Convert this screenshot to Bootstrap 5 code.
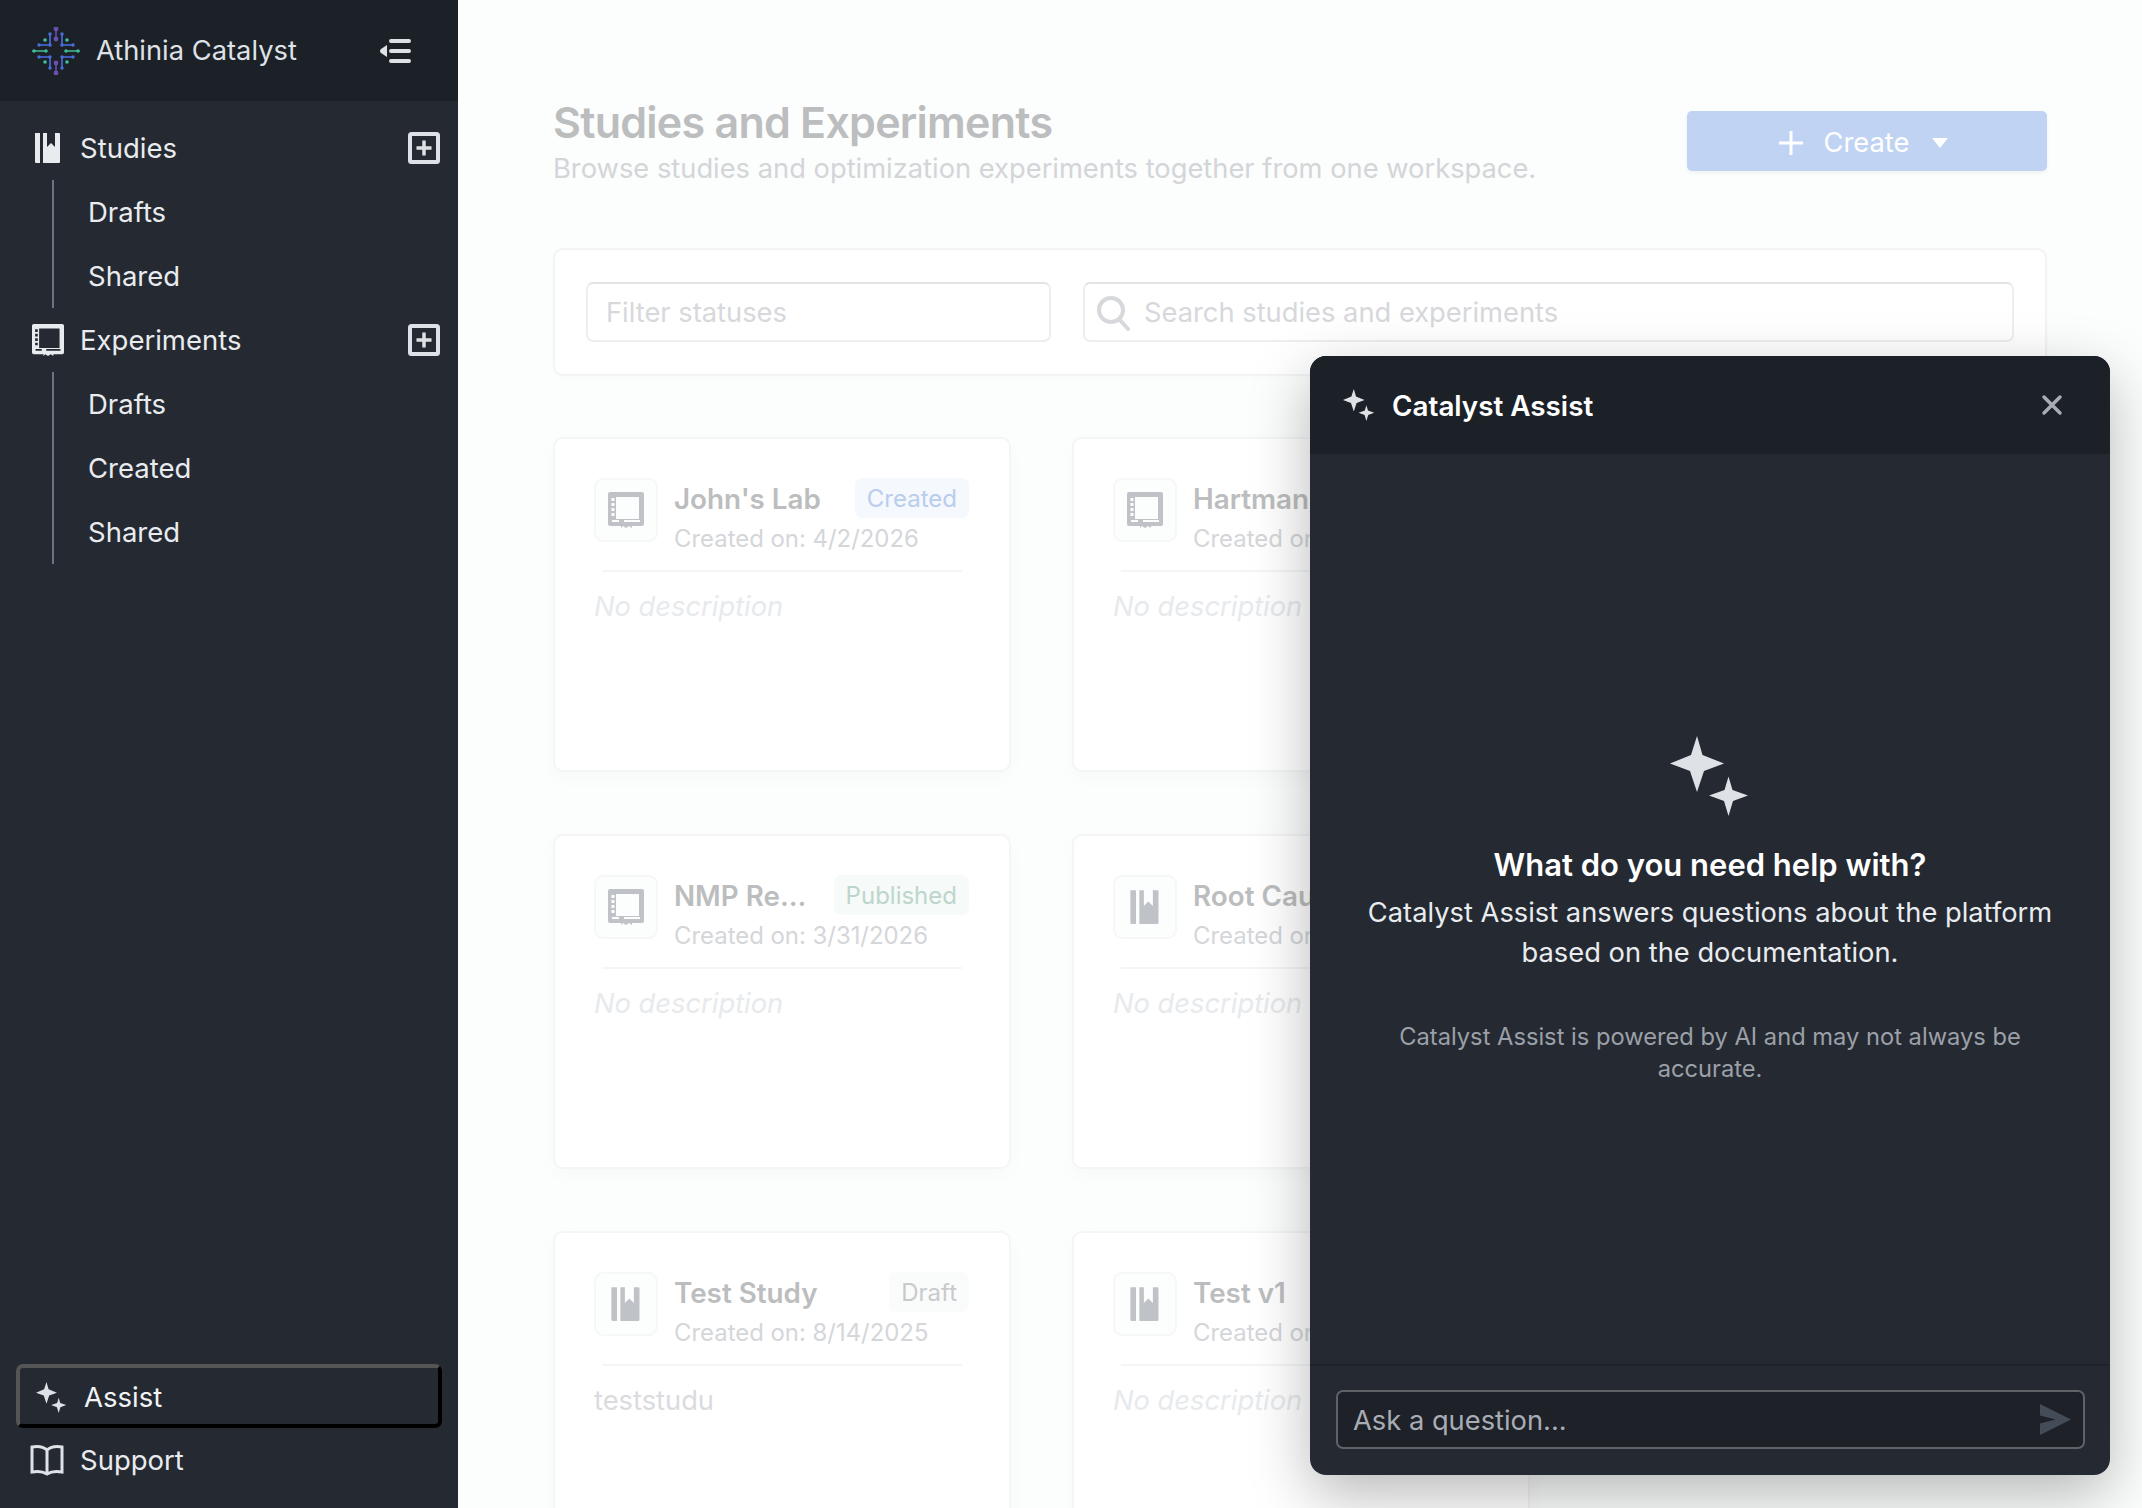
<!DOCTYPE html>
<html lang="en">
<head>
    <meta charset="UTF-8">
    <meta name="viewport" content="width=device-width, initial-scale=1.0">
    <title>Athinia Catalyst</title>
    <link href="https://cdn.jsdelivr.net/npm/bootstrap@5.3.0/dist/css/bootstrap.min.css" rel="stylesheet">
    <style>
        html, body { height: 100%; }
        body { font-family: Inter, "Liberation Sans", sans-serif; background: #fcfdfd; overflow: hidden; }
        /* sidebar */
        .side { width: 458px; height: 100vh; background: #252932; color: #e9ecef; font-size: 27.5px; flex: none; }
        .side-head { height: 101px; background: #1c2027; padding: 0 46px 0 32px; color: #dee2e6; }
        .side-head svg.logo { width: 48px; height: 48px; margin-right: 16px; }
        .side-head span { padding-top: 2px; font-size: 27.3px; }
        .side-nav { padding-top: 15px; }
        .nav-row { height: 64px; padding: 0 18px 0 32px; color: #e9ecef; }
        .nav-row span { padding-top: 2px; }
        .nav-row .ico { width: 32px; height: 32px; margin-right: 16px; flex: none; }
        .sub-list { margin-left: 52px; border-left: 2px solid #6c757d; }
        .sub-row { height: 64px; padding: 2px 0 0 34px; color: #e9ecef; display: flex; align-items: center; }
        .assist-btn { margin: 0 16px; height: 64px; background: #252932; color: #f1f3f5; font-size: 27.5px; padding: 3px 0 0 16px; border-style: solid; border-width: 4px; border-color: #555 #000 #000 #555; border-radius: 7px; width: 426px; text-align: left; }
        .assist-btn svg { width: 31px; height: 31px; margin-right: 17px; color: #dee2e6; }
        .support-row { height: 64px; margin-bottom: 16px; padding-left: 30px; }
        .support-row svg { width: 34px; height: 32px; margin-right: 16px; }
        .support-row span { padding-top: 2px; }
        /* workspace, dimmed */
        .work { padding: 99px 95px 0 95px; flex: 1; min-width: 0; }
        .work-head { height: 149px; }
        .work-title { font-size: 43px; font-weight: 600; color: #bcbdbe; line-height: 46px; letter-spacing: -.75px; margin: 0; }
        .work-sub { font-size: 27.3px; color: #d3d5d8; line-height: 44px; margin-top: 2px; }
        .create-btn { width: 360px; height: 60px; margin-top: 12px; padding: 4px 8px 0 0; background: #c1d3f3; border: 0; border-radius: 5px; color: #fff; font-size: 27.3px; box-shadow: 0 2px 4px rgba(0,0,0,.05); }
        .create-btn svg.plus { margin-right: 20px; }
        .create-btn svg.caret { margin-left: 23px; }
        .filter-box { border: 2px solid #f3f4f5; border-radius: 10px; background: #fff; height: 128px; padding: 32px 31px; box-shadow: 0 1px 4px rgba(0,0,0,.02); gap: 32px; }
        .fake-input { height: 60px; border: 2px solid #eceef0; border-top-color: #e2e3e5; border-radius: 7px; background: #fff; font-size: 27.3px; color: #d6d8db; padding: 2px 18px 0; }
        .fake-input.with-ico { padding-left: 11px; }
        .fake-input.with-ico svg { margin-right: 14px; }
        .cards-grid { display: grid; grid-template-columns: 458px 458px; column-gap: 61px; row-gap: 62px; margin-top: 61px; }
        .study-card { height: 335px; border: 2px solid #f4f5f6; border-radius: 10px; background: #fff; padding: 39px 40px 0 39px; box-shadow: 0 6px 20px rgba(0,0,0,.025); }
        .ico-box { width: 64px; height: 64px; border: 2px solid #f6f7f8; border-radius: 9px; background: #fcfdfd; flex: none; margin-right: 16px; color: #bfc3c7; }
        .ico-box svg { width: 36px; height: 36px; }
        .card-name { font-size: 27.8px; font-weight: 600; color: #bcbdbe; line-height: 43px; white-space: nowrap; }
        .card-date { font-size: 23.9px; color: #d4d6d9; line-height: 36.500px; white-space: nowrap; }
        .chip { height: 40px; padding: 0 12px; border-radius: 7px; font-size: 24px; line-height: 42px; margin-left: auto; white-space: nowrap; }
        .chip-blue { background: #f5f8fd; color: #b9cdec; }
        .chip-green { background: #f6faf8; color: #bdd6cb; }
        .chip-gray { background: #fafbfb; color: #c8cacc; }
        .card-rule { height: 2px; background: #f4f5f6; margin: 12.500px 7px 14.500px 8px; }
        .card-desc { font-size: 27.3px; color: #e7eaed; font-style: italic; line-height: 40px; white-space: nowrap; }
        .card-desc.has-text { font-style: normal; color: #d9dbde; }
        /* assist panel over the page */
        .assist-panel { position: absolute; left: 1310px; top: 356px; width: 800px; height: 1119px; background: #252932; border-radius: 16px; overflow: hidden; color: #fff; }
        .panel-shadow { position: absolute; left: 1310px; top: 356px; width: 800px; height: 1119px; border-radius: 16px; box-shadow: 0 20px 60px rgba(0,0,0,.28); }
        .assist-head { height: 98px; background: #1c2027; padding: 0 47px 0 33px; font-size: 27.8px; font-weight: 600; }
        .assist-head span { padding-top: 3px; }
        .assist-head svg.spark { width: 32px; height: 32px; margin-right: 17px; color: #dee2e6; }
        .assist-body { height: 910px; padding-top: 282px; text-align: center; }
        .assist-body svg { width: 80px; height: 80px; display: block; margin: 0 auto 27px 360px; }
        .help-title { font-size: 31px; font-weight: 600; line-height: 44px; }
        .help-text { font-size: 27.3px; line-height: 39.500px; color: #e9ecef; margin-top: 6px; }
        .help-note { font-size: 23.700px; line-height: 31.500px; color: #9ba0a8; margin: 49px auto 0; width: 680px; }
        .assist-foot { border-top: 2px solid #1f232a; padding: 24px 25px 0 26px; }
        .ask-box { height: 59px; background: #1e2128; border: 2px solid #5f6368; border-radius: 7px; padding: 0 11px 0 15px; font-size: 27.3px; color: #a8adb5; }
        .ask-box span { padding-top: 3px; }
        .ask-box svg { width: 33px; height: 33px; }
    </style>
</head>
<body>
    <svg width="0" height="0" class="position-absolute">
        <symbol id="i-study" viewBox="0 0 32 32">
            <path fill="currentColor" d="M3 1h5v30H4a1 1 0 0 1-1-1zM11 1h4v14l4-4 4 4V1h4a1 1 0 0 1 1 1v28a1 1 0 0 1-1 1H11z"/>
        </symbol>
        <symbol id="i-exp" viewBox="0 0 36 36">
            <path fill="currentColor" fill-rule="evenodd" d="M2 0h32a2 2 0 0 1 2 2v30a2 2 0 0 1-2 2H24v2l-3-2-3 2-3-2-2 2v-2H2a2 2 0 0 1-2-2V2a2 2 0 0 1 2-2zM8 5v22h23V5zM4 28v2h7v-2zM16 28v2h16v-2zM3.500 6h3v3h-3zM3.500 11h3v3h-3zM3.500 16h3v3h-3zM3.500 21h3v3h-3z"/>
        </symbol>
        <symbol id="i-spark" viewBox="0 0 80 80">
            <path fill="currentColor" d="M27 0l5.500 19L54 27.500 34 35l-7 21-7-21L0 27.500 21 19z"/>
            <path fill="currentColor" d="M58.500 40.500l4 13.500 15.500 5.500-15 5.500-4.500 15-4.500-15L39 59.500 54.500 54z"/>
        </symbol>
    </svg>

    <div class="d-flex">
        <!-- Sidebar -->
        <aside class="side d-flex flex-column">
            <div class="side-head d-flex align-items-center">
                <svg class="logo" viewBox="0 0 48 48" fill="none" stroke-width="1.600" stroke-linecap="round">
                    <g stroke="#6a4fb0" fill="#6a4fb0">
                        <path d="M24 2v10M24 36v10"/><circle cx="24" cy="2" r="1.600"/><circle cx="24" cy="12" r="1.600"/><circle cx="24" cy="36" r="1.600"/><circle cx="24" cy="46" r="1.600"/>
                    </g>
                    <g stroke="#4a6ee0">
                        <path d="M18 7v11H7M30 7v11h11M18 41V30H7M30 41V30h11"/>
                    </g>
                    <g fill="#4a6ee0">
                        <circle cx="18" cy="7" r="1.700"/><circle cx="7" cy="18" r="1.700"/><circle cx="18" cy="18" r="1.700"/><circle cx="30" cy="7" r="1.700"/><circle cx="41" cy="18" r="1.700"/><circle cx="30" cy="18" r="1.700"/><circle cx="18" cy="41" r="1.700"/><circle cx="7" cy="30" r="1.700"/><circle cx="18" cy="30" r="1.700"/><circle cx="30" cy="41" r="1.700"/><circle cx="41" cy="30" r="1.700"/><circle cx="30" cy="30" r="1.700"/>
                    </g>
                    <g stroke="#3fbf9b">
                        <path d="M1 24h13M34 24h13"/>
                    </g>
                    <g fill="#3fbf9b">
                        <circle cx="13" cy="13" r="1.800"/><circle cx="35" cy="13" r="1.800"/><circle cx="13" cy="35" r="1.800"/><circle cx="35" cy="35" r="1.800"/><circle cx="2" cy="24" r="1.700"/><circle cx="14" cy="24" r="1.700"/><circle cx="34" cy="24" r="1.700"/><circle cx="46" cy="24" r="1.700"/>
                    </g>
                </svg>
                <span>Athinia Catalyst</span>
                <svg class="ms-auto" width="32" height="26" viewBox="0 0 32 26">
                    <path fill="#dee2e6" d="M11 1h18a2 2 0 0 1 0 4H11a2 2 0 0 1 0-4zM11 11h18a2 2 0 0 1 0 4H11a2 2 0 0 1 0-4zM11 21h18a2 2 0 0 1 0 4H11a2 2 0 0 1 0-4zM7 7v12L1 15a2.500 2.500 0 0 1 0-4z"/>
                </svg>
            </div>

            <div class="side-nav flex-grow-1">
                <div class="nav-row d-flex align-items-center">
                    <svg class="ico"><use href="#i-study"/></svg>
                    <span>Studies</span>
                    <svg class="ms-auto" width="32" height="32" viewBox="0 0 32 32" fill="none" stroke="#dee2e6" stroke-width="4"><rect x="2" y="2" width="28" height="28" rx="1.500"/><path stroke-width="3.500" d="M16 8.500v15M8.500 16h15"/></svg>
                </div>
                <div class="sub-list">
                    <div class="sub-row">Drafts</div>
                    <div class="sub-row">Shared</div>
                </div>
                <div class="nav-row d-flex align-items-center">
                    <svg class="ico"><use href="#i-exp"/></svg>
                    <span>Experiments</span>
                    <svg class="ms-auto" width="32" height="32" viewBox="0 0 32 32" fill="none" stroke="#dee2e6" stroke-width="4"><rect x="2" y="2" width="28" height="28" rx="1.500"/><path stroke-width="3.500" d="M16 8.500v15M8.500 16h15"/></svg>
                </div>
                <div class="sub-list">
                    <div class="sub-row">Drafts</div>
                    <div class="sub-row">Created</div>
                    <div class="sub-row">Shared</div>
                </div>
            </div>

            <button class="assist-btn d-flex align-items-center">
                <svg><use href="#i-spark"/></svg>Assist
            </button>
            <div class="support-row d-flex align-items-center">
                <svg viewBox="0 0 34 32" fill="none" stroke="#dee2e6" stroke-width="3"><path d="M17 6C13 2.500 7 2 2 3v25c5-1 11-.5 15 2 4-2.500 10-3 15-2V3c-5-1-11-.5-15 3zM17 6v24"/></svg>
                <span>Support</span>
            </div>
        </aside>

        <!-- Workspace -->
        <main class="work">
            <div class="work-head d-flex justify-content-between align-items-start">
                <div>
                    <h1 class="work-title">Studies and Experiments</h1>
                    <div class="work-sub">Browse studies and optimization experiments together from one workspace.</div>
                </div>
                <button class="create-btn d-flex align-items-center justify-content-center">
                    <svg class="plus" width="26" height="26" viewBox="0 0 26 26"><path fill="none" stroke="#fff" stroke-width="3" d="M13 1v24M1 13h24"/></svg>
                    Create
                    <svg class="caret" width="16" height="10" viewBox="0 0 16 10"><path fill="#fff" d="M0 0h16L8 10z"/></svg>
                </button>
            </div>

            <div class="filter-box d-flex">
                <div class="fake-input d-flex align-items-center flex-shrink-0" style="width: 465px">Filter statuses</div>
                <div class="fake-input with-ico d-flex align-items-center flex-grow-1">
                    <svg width="34" height="36" viewBox="0 0 34 36" fill="none" stroke="#d6d8db" stroke-width="4"><circle cx="15" cy="15" r="12"/><path d="M24 25l8 9" stroke-linecap="round"/></svg>
                    Search studies and experiments
                </div>
            </div>

            <div class="cards-grid">
                <div class="study-card">
                    <div class="d-flex">
                        <div class="ico-box d-flex align-items-center justify-content-center"><svg><use href="#i-exp"/></svg></div>
                        <div class="flex-grow-1 overflow-hidden">
                            <div class="d-flex"><span class="card-name">John's Lab</span><span class="chip chip-blue">Created</span></div>
                            <div class="card-date">Created on: 4/2/2026</div>
                        </div>
                    </div>
                    <div class="card-rule"></div>
                    <div class="card-desc">No description</div>
                </div>
                <div class="study-card">
                    <div class="d-flex">
                        <div class="ico-box d-flex align-items-center justify-content-center"><svg><use href="#i-exp"/></svg></div>
                        <div class="flex-grow-1 overflow-hidden">
                            <div class="d-flex"><span class="card-name">Hartman</span></div>
                            <div class="card-date">Created on</div>
                        </div>
                    </div>
                    <div class="card-rule"></div>
                    <div class="card-desc">No description</div>
                </div>
                <div class="study-card">
                    <div class="d-flex">
                        <div class="ico-box d-flex align-items-center justify-content-center"><svg><use href="#i-exp"/></svg></div>
                        <div class="flex-grow-1 overflow-hidden">
                            <div class="d-flex"><span class="card-name">NMP Re...</span><span class="chip chip-green">Published</span></div>
                            <div class="card-date">Created on: 3/31/2026</div>
                        </div>
                    </div>
                    <div class="card-rule"></div>
                    <div class="card-desc">No description</div>
                </div>
                <div class="study-card">
                    <div class="d-flex">
                        <div class="ico-box d-flex align-items-center justify-content-center"><svg><use href="#i-study"/></svg></div>
                        <div class="flex-grow-1 overflow-hidden">
                            <div class="d-flex"><span class="card-name">Root Cause</span></div>
                            <div class="card-date">Created on</div>
                        </div>
                    </div>
                    <div class="card-rule"></div>
                    <div class="card-desc">No description</div>
                </div>
                <div class="study-card">
                    <div class="d-flex">
                        <div class="ico-box d-flex align-items-center justify-content-center"><svg><use href="#i-study"/></svg></div>
                        <div class="flex-grow-1 overflow-hidden">
                            <div class="d-flex"><span class="card-name">Test Study</span><span class="chip chip-gray">Draft</span></div>
                            <div class="card-date">Created on: 8/14/2025</div>
                        </div>
                    </div>
                    <div class="card-rule"></div>
                    <div class="card-desc has-text">teststudu</div>
                </div>
                <div class="study-card">
                    <div class="d-flex">
                        <div class="ico-box d-flex align-items-center justify-content-center"><svg><use href="#i-study"/></svg></div>
                        <div class="flex-grow-1 overflow-hidden">
                            <div class="d-flex"><span class="card-name">Test v1</span></div>
                            <div class="card-date">Created on</div>
                        </div>
                    </div>
                    <div class="card-rule"></div>
                    <div class="card-desc">No description</div>
                </div>
            </div>
        </main>
    </div>

    <!-- Catalyst Assist panel -->
    <div class="panel-shadow"></div>
    <section class="assist-panel d-flex flex-column">
        <div class="assist-head d-flex align-items-center">
            <svg class="spark"><use href="#i-spark"/></svg>
            <span>Catalyst Assist</span>
            <svg class="ms-auto" width="22" height="22" viewBox="0 0 22 22"><path fill="none" stroke="#a9adb3" stroke-width="3.500" stroke-linecap="round" d="M3 3l16 16M19 3L3 19"/></svg>
        </div>
        <div class="assist-body">
            <svg style="color:#dee2e6"><use href="#i-spark"/></svg>
            <div class="help-title">What do you need help with?</div>
            <div class="help-text">Catalyst Assist answers questions about the platform<br>based on the documentation.</div>
            <div class="help-note">Catalyst Assist is powered by AI and may not always be accurate.</div>
        </div>
        <div class="assist-foot">
            <div class="ask-box d-flex align-items-center">
                <span>Ask a question...</span>
                <svg class="ms-auto" viewBox="0 0 34 34"><path fill="#444c57" d="M1 1l32 16L1 33v-12l16-4-16-4z"/></svg>
            </div>
        </div>
    </section>

    <script src="https://cdn.jsdelivr.net/npm/bootstrap@5.3.0/dist/js/bootstrap.bundle.min.js"></script>
</body>
</html>
